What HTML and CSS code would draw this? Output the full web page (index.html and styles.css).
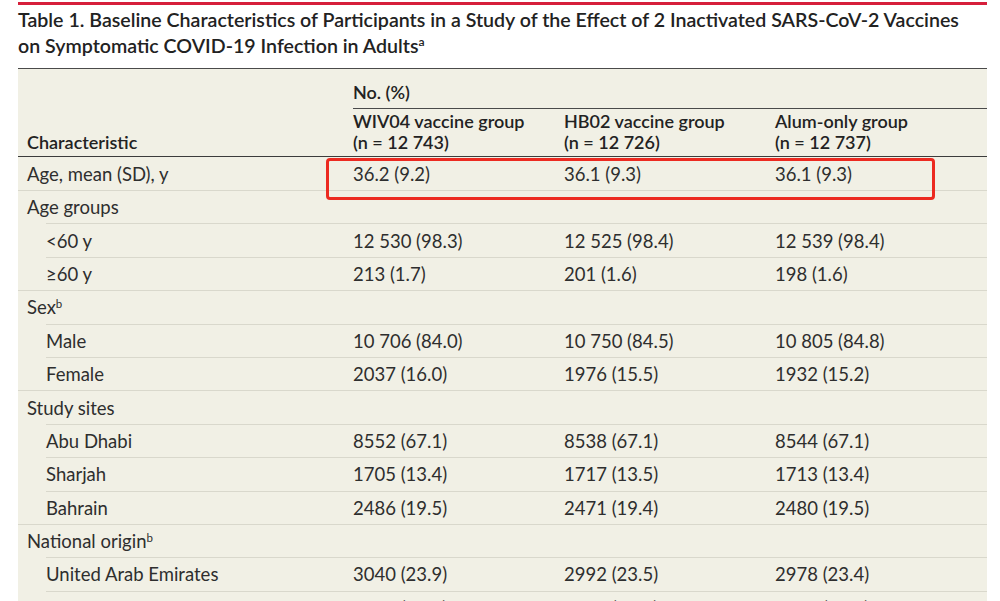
FILE: index.html
```html
<!DOCTYPE html>
<html lang="en">
<head>
<meta charset="utf-8">
<title>Table 1</title>
<link rel="stylesheet" href="styles.css">
</head>
<body>
<div class="page">
  <div class="topbar"></div>
  <h1 class="title">Table 1. Baseline Characteristics of Participants in a Study of the Effect of 2 Inactivated SARS-CoV-2 Vaccines<br>on Symptomatic COVID-19 Infection in Adults<sup>a</sup></h1>
  <table class="tbl">
    <colgroup>
      <col class="c1"><col class="c2"><col class="c3"><col class="c4">
    </colgroup>
    <thead>
      <tr class="h1row">
        <th></th>
        <th colspan="3" class="span"><div class="spanlabel">No. (%)</div></th>
      </tr>
      <tr class="h2row">
        <th class="first">Characteristic</th>
        <th>WIV04 vaccine group<br>(n = 12&nbsp;743)</th>
        <th>HB02 vaccine group<br>(n = 12&nbsp;726)</th>
        <th>Alum-only group<br>(n = 12&nbsp;737)</th>
      </tr>
    </thead>
    <tbody>
      <tr class="r0"><td>Age, mean (SD), y</td><td>36.2 (9.2)</td><td>36.1 (9.3)</td><td>36.1 (9.3)</td></tr>
      <tr><td>Age groups</td><td></td><td></td><td></td></tr>
      <tr class="sub"><td>&lt;60 y</td><td>12&nbsp;530 (98.3)</td><td>12&nbsp;525 (98.4)</td><td>12&nbsp;539 (98.4)</td></tr>
      <tr class="sub"><td>≥60 y</td><td>213 (1.7)</td><td>201 (1.6)</td><td>198 (1.6)</td></tr>
      <tr><td>Sex<sup>b</sup></td><td></td><td></td><td></td></tr>
      <tr class="sub"><td>Male</td><td>10&nbsp;706 (84.0)</td><td>10&nbsp;750 (84.5)</td><td>10&nbsp;805 (84.8)</td></tr>
      <tr class="sub"><td>Female</td><td>2037 (16.0)</td><td>1976 (15.5)</td><td>1932 (15.2)</td></tr>
      <tr><td>Study sites</td><td></td><td></td><td></td></tr>
      <tr class="sub"><td>Abu Dhabi</td><td>8552 (67.1)</td><td>8538 (67.1)</td><td>8544 (67.1)</td></tr>
      <tr class="sub"><td>Sharjah</td><td>1705 (13.4)</td><td>1717 (13.5)</td><td>1713 (13.4)</td></tr>
      <tr class="sub"><td>Bahrain</td><td>2486 (19.5)</td><td>2471 (19.4)</td><td>2480 (19.5)</td></tr>
      <tr><td>National origin<sup>b</sup></td><td></td><td></td><td></td></tr>
      <tr class="sub"><td>United Arab Emirates</td><td>3040 (23.9)</td><td>2992 (23.5)</td><td>2978 (23.4)</td></tr>
      <tr class="sub"><td>India</td><td>1787 (14.0)</td><td>1791 (14.1)</td><td>1734 (13.6)</td></tr>
    </tbody>
  </table>
  <div class="highlight"></div>
</div>
</body>
</html>
```

FILE: styles.css
```css
html, body {
  margin: 0;
  background: #ffffff;
}

body {
  font-family: Lato, "Liberation Sans", sans-serif;
  color: #2e2e2e;
  overflow: hidden;
}

.page {
  position: relative;
  width: 969px;
  margin-left: 18px;
}

.topbar {
  height: 3px;
  margin-top: 2px;
  background: #d61f3b;
}

.title {
  margin: 2px 0 0;
  padding-bottom: 9px;
  font-size: 19.6px;
  line-height: 26px;
  font-weight: 600;
  color: #222222;
  border-bottom: 1.5px solid #4a4a4a;
}

.title sup,
.tbl sup {
  font-size: 0.62em;
  line-height: 0;
  vertical-align: 0.55em;
}

.tbl {
  width: 969px;
  table-layout: fixed;
  border-collapse: separate;
  border-spacing: 0;
  background: #f1f0e5;
  font-size: 18.5px;
}

.c1 { width: 326px; }
.c2 { width: 211px; }
.c3 { width: 211px; }
.c4 { width: 221px; }

.tbl th {
  text-align: left;
  font-weight: 600;
  font-size: 18px;
  color: #222222;
  vertical-align: bottom;
  line-height: 21px;
  padding: 0 0 0 9px;
}

.h1row th {
  padding-top: 13px;
}

.spanlabel {
  padding-bottom: 5px;
  border-bottom: 1px solid #4a4a4a;
}

.h2row th {
  padding-top: 2px;
  padding-bottom: 3px;
  border-bottom: 1.5px solid #3c3c3c;
}

.tbl td {
  height: 32.4px;
  padding: 0 0 0 9px;
  line-height: 20px;
  vertical-align: middle;
  border-top: 1px solid #d9d8cc;
  white-space: nowrap;
}

.tbl tr.r0 td {
  border-top: none;
  height: 33px;
}

.tbl tr.sub td:first-child {
  padding-left: 28px;
  border-top-color: transparent;
  background-image: linear-gradient(#d9d8cc, #d9d8cc);
  background-repeat: no-repeat;
  background-origin: border-box;
  background-position: 28px 0;
  background-size: calc(100% - 28px) 1px;
}

.highlight {
  position: absolute;
  left: 308px;
  top: 156px;
  width: 603px;
  height: 36px;
  border: 3px solid #ec2a20;
  border-radius: 4px;
}
```
